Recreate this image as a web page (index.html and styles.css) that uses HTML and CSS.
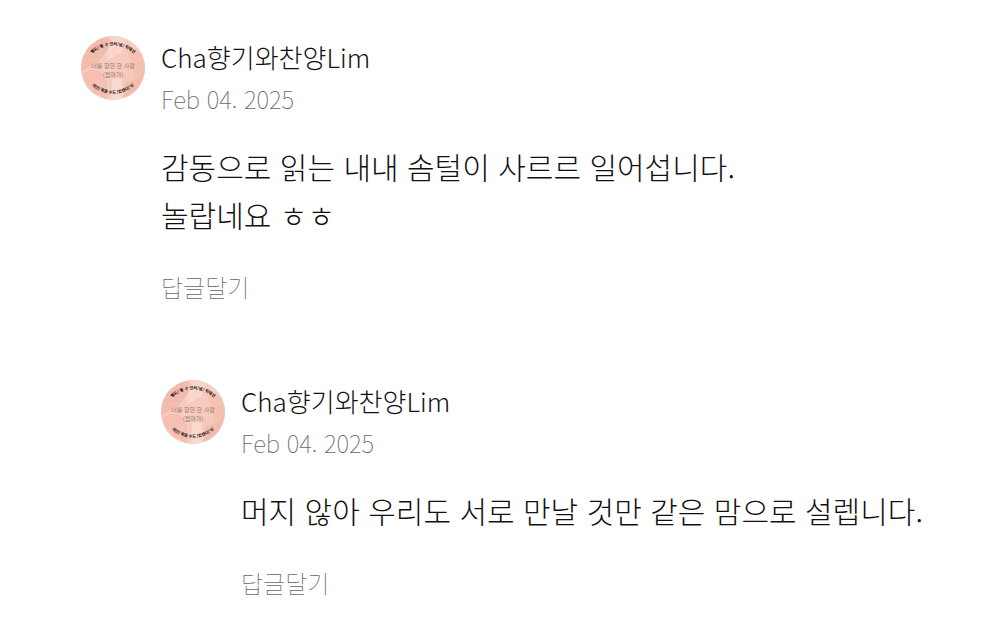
FILE: index.html
```
<!DOCTYPE html>
<html lang="ko">
<head>
    <meta charset="UTF-8">
    <meta name="viewport" content="width=device-width, initial-scale=1.0">
    <title>댓글</title>
    <link rel="stylesheet" href="styles.css">
</head>
<body>
    <main class="comments">
        <article class="comment">
            <svg class="avatar" viewBox="0 0 64 64" role="img" aria-label="Cha향기와찬양Lim">
                <defs>
                    <linearGradient id="skin" x1="0" y1="0" x2="1" y2="1">
                        <stop offset="0" stop-color="#f4bfae"/>
                        <stop offset="0.5" stop-color="#f7cdc0"/>
                        <stop offset="1" stop-color="#f3bfae"/>
                    </linearGradient>
                    <clipPath id="round"><circle cx="32" cy="32" r="32"/></clipPath>
                    <path id="arcTop" d="M7 22 A31 31 0 0 1 57 22"/>
                    <path id="arcBottom" d="M7 45 A31 31 0 0 0 57 45"/>
                </defs>
                <!-- profile picture, used again by the reply -->
                <g id="profile">
                    <g clip-path="url(#round)">
                        <rect width="64" height="64" fill="url(#skin)"/>
                        <path d="M0 12 L22 0 L31 5 Q25 18 18 25 L3 34 L0 36Z" fill="#f0b2a1" opacity="0.5"/>
                        <path d="M31 0 L46 2 L40 17 L25 24 L28 10Z" fill="#f9dcd2" opacity="0.7"/>
                        <path d="M45 12 L64 19 L64 46 L54 39Z" fill="#f1b8a8" opacity="0.5"/>
                        <path d="M2 38 Q14 28 24 39 Q31 48 26 64 L5 53Z" fill="#f3b9a8" opacity="0.6"/>
                        <path d="M31 42 L41 42 L42 64 L30 64Z" fill="#fae0d7" opacity="0.7"/>
                        <path d="M44 47 L61 41 L60 55 L43 62Z" fill="#f1b6a5" opacity="0.5"/>
                        <path d="M3 35 Q20 27 27 45 L28 62 M18 25 Q29 15 33 5" fill="none" stroke="#fae3da" stroke-width="0.8" opacity="0.7"/>
                    </g>
                    <text class="arc-text"><textPath href="#arcTop" startOffset="50%">별도/ 될 수 있어/널/ 위해선</textPath></text>
                    <text class="center-text" x="32" y="32">너를 향한 한 사랑</text>
                    <text class="center-text" x="32" y="41">(엄마가)</text>
                    <text class="arc-text"><textPath href="#arcBottom" startOffset="50%">대신/ 죽을 수도 /있겠다/ 난</textPath></text>
                </g>
            </svg>
            <div class="comment-body">
                <h2 class="name">Cha향기와찬양Lim</h2>
                <time class="date" datetime="2025-02-04">Feb 04. 2025</time>
                <p class="text">감동으로 읽는 내내 솜털이 사르르 일어섭니다.<br>놀랍네요 ㅎㅎ</p>
                <button type="button" class="reply-button">답글달기</button>
            </div>
        </article>

        <article class="comment reply">
            <svg class="avatar" viewBox="0 0 64 64" role="img" aria-label="Cha향기와찬양Lim"><use href="#profile"/></svg>
            <div class="comment-body">
                <h2 class="name">Cha향기와찬양Lim</h2>
                <time class="date" datetime="2025-02-04">Feb 04. 2025</time>
                <p class="text">머지 않아 우리도 서로 만날 것만 같은 맘으로 설렙니다.</p>
                <button type="button" class="reply-button">답글달기</button>
            </div>
        </article>
    </main>
</body>
</html>
```
FILE: styles.css
```
* { box-sizing: border-box; }
body { margin: 0; background-color: #fff; color: #111; font-family: "Noto Sans CJK KR", sans-serif; font-weight: 300; }
.comments { padding: 36px 40px 24px 81px; }
.comment { display: flex; gap: 16px; }
.reply { margin-top: 75px; padding-left: 80px; }
.avatar { flex: none; width: 64px; height: 64px; }
.comment-body { flex: 1; min-width: 0; }
.name { margin: 0; padding-top: 3px; font-size: 26px; line-height: 36px; font-weight: 300; }
.date { display: block; margin-top: 6px; font-size: 24px; line-height: 36px; font-weight: 100; color: #666; }
.text { margin: 25px 0 0; font-size: 30px; line-height: 48px; }
.reply-button { display: block; margin-top: 31px; padding: 0; border: none; background: none; font: inherit; font-size: 24px; line-height: 36px; font-weight: 100; color: #666; cursor: pointer; }
.arc-text { font-size: 4px; font-weight: 900; fill: #30221e; text-anchor: middle; }
.center-text { font-size: 6px; font-weight: 400; fill: #94796f; text-anchor: middle; }
```
